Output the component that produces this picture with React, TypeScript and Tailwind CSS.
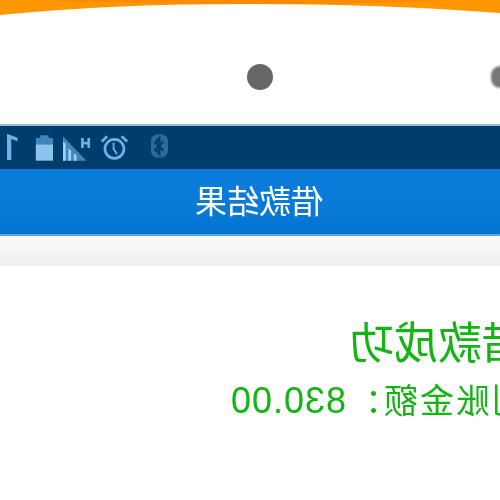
export default function App() {
  return (
    <div
      className="relative w-[500px] h-[500px] overflow-hidden bg-white -scale-x-100"
      style={{ fontFamily: '"Liberation Sans", "Noto Sans CJK SC", sans-serif' }}
    >
      {/* Phone frame */}
      <div className="h-[124px] flex flex-col">
        <svg width="500" height="18" viewBox="0 0 500 18" className="block blur-[0.5px]">
          <path d="M0 0H500V15C420 7 340 4 250 4C160 4 80 7 0 13Z" fill="#ff9800" />
          <path d="M40 0H460C400 3 330 4 250 4C170 4 100 3 40 0Z" fill="#fb8c00" />
        </svg>
        <div className="relative h-[106px]">
          <div className="absolute left-[227px] top-[46px] w-[26px] h-[26px] rounded-full bg-[#666666] blur-[0.5px]" />
          <div className="absolute left-[-9px] top-[48px] w-[18px] h-[22px] rounded-full bg-[#777777] blur-[1px]" />
        </div>
      </div>

      {/* Status bar */}
      <div className="h-[45px] border-t-2 border-[#9dbdd6] bg-[#003c6c] flex items-center pl-[332px] text-[#6fb1e2]">
        <svg width="19" height="26" viewBox="0 0 19 26" className="mt-[-4px] blur-[0.5px]">
          <rect width="19" height="26" rx="8" fill="#2a6b9c" />
          <path d="M5 8l9 9-4.500 5V4L14 9l-9 9" fill="none" stroke="#003c6c" strokeWidth="2.500" />
        </svg>
        <svg width="30" height="29" viewBox="0 0 30 29" className="ml-[23px] blur-[0.4px]">
          <circle cx="15" cy="16" r="10.500" fill="none" stroke="currentColor" strokeWidth="3" />
          <path d="M16 9v7l-4 6" fill="none" stroke="currentColor" strokeWidth="2" />
          <path d="M1 8l6-6M29 8l-6-6" fill="none" stroke="currentColor" strokeWidth="3" />
        </svg>
        <svg width="31" height="28" viewBox="0 0 31 28" className="ml-[10px] blur-[0.4px]">
          <path d="M1 3h3v4h4V3h3v11H8v-4H4v4H1z" fill="currentColor" />
          <path d="M31 1V28H5Z" fill="#3f86bd" />
          <path d="M31 7v21h-3V9zM25 14v14h-3V17zM19 20v8h-3v-6z" fill="#9fd0f2" />
        </svg>
        <svg width="19" height="28" viewBox="0 0 19 28" className="ml-[10px] blur-[0.4px]">
          <path d="M5 0h9v3h5v7H0V3h5z" fill="#3f86bd" />
          <rect y="10" width="19" height="18" fill="#8cc4ec" />
        </svg>
        <span
          className="ml-[15px] text-[36px] leading-none font-medium"
          style={{ fontFamily: 'Roboto, sans-serif' }}
        >
          1
        </span>
      </div>

      {/* Title bar */}
      <div className="h-[67px] border-b-2 border-[#5aa6e4] bg-gradient-to-b from-[#0a7bd8] via-[#0a7bd8] to-[#0474d2] flex items-center justify-center pr-[18px]">
        <span className="text-[32px] leading-none text-white blur-[0.3px]">借款结果</span>
      </div>

      {/* Divider shadow */}
      <div className="h-[30px] border-b border-[#f4f4f4] bg-gradient-to-b from-[#fbfbfb] to-[#eeeeee]" />

      {/* Result */}
      <div className="ml-[-26px] pt-[53px] text-[#14b414] whitespace-nowrap blur-[0.3px]">
        <p className="text-[44px] leading-[50px]">借款成功</p>
        <p className="mt-[12px] text-[34px] leading-[40px] tracking-[2px]">
          到账金额：<span className="text-[36px] tracking-[1px]">830.00</span>
        </p>
      </div>
    </div>
  )
}
